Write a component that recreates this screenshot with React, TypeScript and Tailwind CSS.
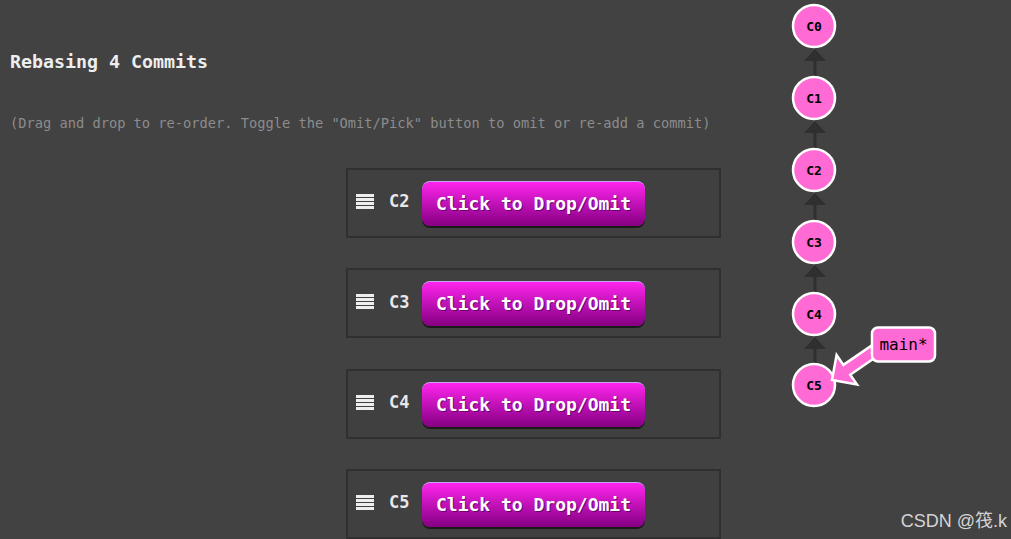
import React from "react";

const mono = { fontFamily: '"DejaVu Sans Mono", "Liberation Mono", monospace' };

function Hamburger() {
  return (
    <div className="flex flex-col gap-[1px] w-[18px] -mt-[4px]">
      <div className="h-[3px] bg-[#eeeeee]" />
      <div className="h-[3px] bg-[#eeeeee]" />
      <div className="h-[3px] bg-[#eeeeee]" />
      <div className="h-[3px] bg-[#eeeeee]" />
    </div>
  );
}

function Card({ id }: { id: string }) {
  return (
    <div className="w-[375px] h-[70px] border-2 border-[#303030] bg-[#404040] flex items-center pl-[8px] pt-[1px]">
      <Hamburger />
      <span className="ml-[15px] text-[17px] font-bold text-[#e8e8e8] w-[33px] -mt-[3px]">{id}</span>
      <button className="h-[45px] w-[223px] rounded-[8px] bg-linear-to-b from-[#ff24ee] to-[#860082] border-t border-t-[#c4a6f0] shadow-[0_2px_0_#1a1a1a] text-white text-[18px] font-bold [text-shadow:1px_1px_0_rgba(60,0,60,0.6)] flex items-center justify-center pb-[1px]">
        Click to Drop/Omit
      </button>
    </div>
  );
}

function Graph() {
  const ys = [26, 98, 170, 242, 314, 385];
  const cx = 814;
  return (
    <svg className="absolute left-0 top-0" width={1011} height={539} style={mono}>
      {ys.slice(1).map((y, i) => {
        const top = ys[i] + 23;
        return (
          <g key={i}>
            <line x1={cx + 1} y1={top + 10} x2={cx + 1} y2={y - 22} stroke="#2f2f2f" strokeWidth={3} />
            <polygon points={`${cx + 1},${top} ${cx - 10},${top + 12} ${cx + 12},${top + 12}`} fill="#2f2f2f" />
          </g>
        );
      })}
      {ys.map((y, i) => (
        <g key={i}>
          <circle cx={cx} cy={y} r={21} fill="#ff6ad5" stroke="#ffffff" strokeWidth={2.5} />
          <text x={cx} y={y + 4.5} textAnchor="middle" fontSize={13} fontWeight="bold" fill="#000">
            {"C" + i}
          </text>
        </g>
      ))}
      <polygon
        points="883.2,352 850.2,374.7 857,384.6 832,380 836.6,355 843.4,364.9 876.4,342.2"
        fill="#ff6ad5"
        stroke="#ffffff"
        strokeWidth={2.5}
        strokeLinejoin="miter"
      />
      <rect x={872} y={327.5} width={63} height={34} rx={6} fill="#ff6ad5" stroke="#ffffff" strokeWidth={2.5} />
      <text x={903.5} y={350} textAnchor="middle" fontSize={16} fill="#000">
        main*
      </text>
    </svg>
  );
}

export default function App() {
  return (
    <div className="relative w-[1011px] h-[539px] overflow-hidden bg-[#424242]" style={mono}>
      <div className="pl-[10px] pt-[50px]">
        <div className="text-[18.3px] leading-[24px] font-bold text-[#eeeeee]">Rebasing 4 Commits</div>
        <div className="mt-[40px] text-[13.7px] leading-[18px] text-[#8c8c8c]">
          (Drag and drop to re-order. Toggle the "Omit/Pick" button to omit or re-add a commit)
        </div>
      </div>
      <div className="pl-[346px] mt-[36px] flex flex-col gap-[30.3px]">
        <Card id="C2" />
        <Card id="C3" />
        <Card id="C4" />
        <Card id="C5" />
      </div>
      <Graph />
      <div
        className="absolute right-[4px] bottom-[6px] text-[18px] leading-[24px] text-[#d4d4d4]"
        style={{ fontFamily: '"Liberation Sans", "Noto Sans CJK SC", sans-serif' }}
      >
        CSDN @筏.k
      </div>
    </div>
  );
}
